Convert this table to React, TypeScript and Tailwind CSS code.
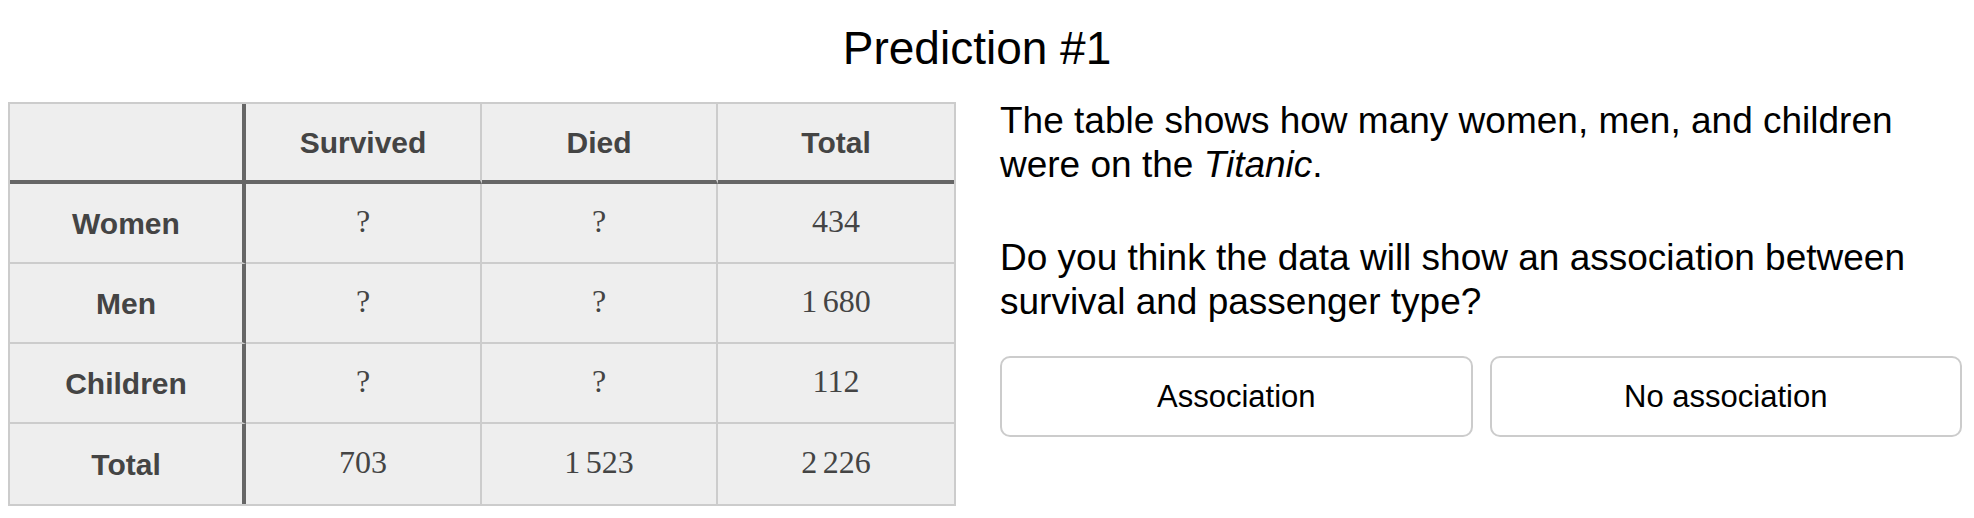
const columns = ["", "Survived", "Died", "Total"];

const rows = [
  { label: "Women", values: ["?", "?", "434"] },
  { label: "Men", values: ["?", "?", "1\u2006680"] },
  { label: "Children", values: ["?", "?", "112"] },
  { label: "Total", values: ["703", "1\u2006523", "2\u2006226"] },
];

function Cell({
  children,
  first,
  last,
  header,
  bottom,
  bold,
}: {
  children?: React.ReactNode;
  first?: boolean;
  last?: boolean;
  header?: boolean;
  bottom?: boolean;
  bold?: boolean;
}) {
  const right = first
    ? "border-r-4 border-r-[#666]"
    : last
      ? ""
      : "border-r-2 border-r-[#ccc]";
  const below = header
    ? "border-b-4 border-b-[#666]"
    : bottom
      ? ""
      : "border-b-2 border-b-[#ccc]";
  const font = bold
    ? "font-['Liberation_Sans',Arial,sans-serif] font-bold text-[30px]"
    : "font-['Liberation_Serif','Times_New_Roman',serif] text-[32px] pb-[4px]";
  return (
    <div
      className={`flex h-[80px] items-center justify-center text-[#444] ${right} ${below} ${font}`}
    >
      {children}
    </div>
  );
}

export default function App() {
  return (
    <div className="min-h-[518px] bg-white pl-[8px] pr-[12px] font-['Liberation_Sans',Arial,sans-serif] text-black">
      <h1 className="pr-[16px] pt-[20px] text-center text-[46px] leading-[56px]">Prediction #1</h1>

      <div className="mt-[26px] flex gap-[44px]">
        <div className="grid w-[948px] shrink-0 grid-cols-4 border-2 border-[#ccc] bg-[#eee]">
          {columns.map((c, i) => (
            <Cell key={i} header bold first={i === 0} last={i === 3}>
              {c}
            </Cell>
          ))}
          {rows.map((r, ri) => (
            <>
              <Cell key={r.label} first bold bottom={ri === rows.length - 1}>
                {r.label}
              </Cell>
              {r.values.map((v, vi) => (
                <Cell key={r.label + vi} last={vi === 2} bottom={ri === rows.length - 1}>
                  {v}
                </Cell>
              ))}
            </>
          ))}
        </div>

        <div className="flex-1 text-[37px] leading-[44px]">
          <p className="-mt-[3px]">
            The table shows how many women, men, and children were on the <em>Titanic</em>.
          </p>
          <p className="mt-[49px]">
            Do you think the data will show an association between survival and passenger type?
          </p>
          <div className="mt-[32px] grid grid-cols-2 gap-[17px]">
            <button className="h-[81px] rounded-[10px] border-2 border-[#ccc] bg-white text-[31px] text-black">
              Association
            </button>
            <button className="h-[81px] rounded-[10px] border-2 border-[#ccc] bg-white text-[31px] text-black">
              No association
            </button>
          </div>
        </div>
      </div>
    </div>
  );
}
